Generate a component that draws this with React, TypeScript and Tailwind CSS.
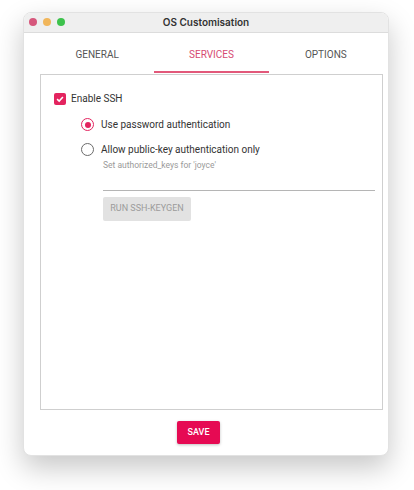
import React from 'react';

const tabs = ['GENERAL', 'SERVICES', 'OPTIONS'];

const Radio = ({ checked, label }: { checked?: boolean; label: string }) => (
  <div className="flex items-center gap-[7px]">
    <div
      className={`flex h-[13px] w-[13px] items-center justify-center rounded-full border-[1.5px] ${
        checked ? 'border-[#e3245f]' : 'border-[#6b6b6b]'
      }`}
    >
      {checked && <div className="h-[6px] w-[6px] rounded-full bg-[#e3245f]" />}
    </div>
    <span className="text-[10px] text-[#333]">{label}</span>
  </div>
);

const App = () => {
  return (
    <div className="flex h-[490px] w-[414px] justify-start bg-white pl-[23px] pt-[12px] font-['Roboto',sans-serif]">
      <div className="flex h-[444px] w-[366px] flex-col overflow-hidden rounded-[8px] border border-[#e2e2e2] bg-white shadow-[0_12px_28px_rgba(0,0,0,0.22)]">
        {/* title bar */}
        <div className="relative flex h-[20px] shrink-0 items-center justify-center border-b border-[#dcdcdc] bg-[#efefef]">
          <div className="absolute left-[5px] top-[5px] flex gap-[6px]">
            <div className="h-[8px] w-[8px] rounded-full bg-[#d6577c]" />
            <div className="h-[8px] w-[8px] rounded-full bg-[#f1b65b]" />
            <div className="h-[8px] w-[8px] rounded-full bg-[#3dc24c]" />
          </div>
          <span className="font-['Inter',sans-serif] text-[10px] font-semibold text-[#333]">OS Customisation</span>
        </div>

        <div className="flex flex-1 flex-col pl-[16px] pr-[5px]">
          {/* tabs */}
          <div className="grid h-[40px] grid-cols-3">
            {tabs.map((t) => (
              <div key={t} className="flex flex-col items-center">
                <span
                  className={`mt-[14px] text-[10px] ${t === 'SERVICES' ? 'text-[#d64a72]' : 'text-[#555]'}`}
                >
                  {t}
                </span>
                {t === 'SERVICES' && <div className="mt-auto h-[2px] w-full bg-[#e2587a]" />}
              </div>
            ))}
          </div>

          {/* content */}
          <div className="mt-[1px] h-[336px] border border-[#cfcfcf] pl-[13px] pr-[7px] pt-[16px]">
            <div className="flex items-center gap-[5px]">
              <div className="flex h-[12px] w-[12px] items-center justify-center rounded-[2px] bg-[#e3245f]">
                <svg viewBox="0 0 12 12" className="h-[10px] w-[10px]" fill="none" stroke="white" strokeWidth="1.8">
                  <path d="M2.5 6.2 L5 8.5 L9.5 3.5" />
                </svg>
              </div>
              <span className="text-[10px] text-[#333]">Enable SSH</span>
            </div>

            <div className="ml-[27px] mt-[11px] flex flex-col gap-[10px]">
              <Radio checked label="Use password authentication" />
              <Radio label="Allow public-key authentication only" />
            </div>

            <div className="ml-[49px] mt-[2px]">
              <div className="flex h-[32px] items-start border-b border-[#b5b5b5] text-[8.5px] text-[#9a9a9a]">
                Set authorized_keys for 'joyce'
              </div>
              <div className="mt-[6px] flex">
                <button className="h-[24px] w-[88px] rounded-[2px] bg-[#e2e2e2] text-[9px] text-[#9c9c9c]">
                  RUN SSH-KEYGEN
                </button>
              </div>
            </div>
          </div>

          {/* save */}
          <div className="mt-[11px] flex pl-[137px]">
            <button className="h-[23px] w-[43px] rounded-[2px] bg-[#e60a53] text-[9px] font-medium text-white shadow-[0_1px_3px_rgba(0,0,0,0.25)]">
              SAVE
            </button>
          </div>
        </div>
      </div>
    </div>
  );
};

export default App;
